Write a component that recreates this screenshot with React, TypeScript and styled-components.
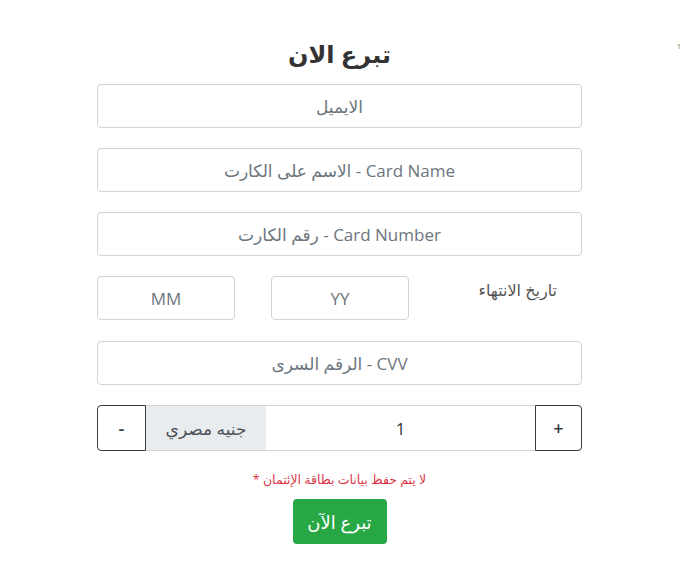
import React from "react";
import styled, { createGlobalStyle } from "styled-components";

const GlobalStyle = createGlobalStyle`
  html, body {
    margin: 0;
    padding: 0;
    background: #fff;
  }
  body {
    font-family: "Open Sans", "DejaVu Sans", sans-serif;
    color: #495057;
  }
  * {
    box-sizing: border-box;
  }
`;

const Page = styled.div`
  position: relative;
  width: 690px;
  min-height: 579px;
  padding: 36px 11px 0 0;
`;

const Mark = styled.span`
  position: absolute;
  top: 42px;
  left: 677px;
  font-size: 7px;
  color: #8a6d3b;
`;

const Form = styled.form`
  width: 485px;
  margin: 0 auto;
  display: flex;
  flex-direction: column;
  gap: 20px;
`;

const Title = styled.h2`
  margin: 0 0 -8px;
  text-align: center;
  font-size: 24px;
  font-weight: 700;
  color: #333;
  line-height: 36px;
`;

const Input = styled.input<{ $width?: number }>`
  display: block;
  width: ${p => (p.$width ? `${p.$width}px` : "100%")};
  height: 44px;
  padding: 6px 12px;
  border: 1px solid #ced4da;
  border-radius: 4px;
  font-family: inherit;
  font-size: 17px;
  color: #495057;
  text-align: center;
  background: #fff;
  outline: none;
  &::placeholder {
    color: #6c757d;
  }
`;

const DateRow = styled.div`
  display: flex;
  align-items: flex-start;
  gap: 36px;
  height: 45px;
`;

const DateLabel = styled.label`
  flex: 1;
  padding: 3px 25px 0 0;
  font-size: 16px;
  color: #555;
`;

const Group = styled.div`
  display: flex;
  height: 46px;
`;

const StepButton = styled.button<{ $side: "left" | "right" }>`
  width: ${p => (p.$side === "right" ? "47px" : "49px")};
  height: 46px;
  border: 1px solid #343a40;
  background: #fff;
  color: #343a40;
  font-family: inherit;
  font-size: 18px;
  font-weight: 600;
  border-radius: ${p => (p.$side === "right" ? "0 4px 4px 0" : "4px 0 0 4px")};
  padding: 0;
`;

const Addon = styled.span`
  width: 120px;
  display: flex;
  align-items: center;
  justify-content: center;
  background: #e9ecef;
  border-top: 1px solid #ced4da;
  border-bottom: 1px solid #ced4da;
  font-size: 17px;
  color: #495057;
`;

const Amount = styled(Input)`
  flex: 1;
  width: auto;
  height: 46px;
  border-radius: 0;
  border-left: none;
  border-right: none;
  color: #333;
`;

const Notice = styled.p`
  margin: 0 0 -9px;
  text-align: center;
  font-size: 12.5px;
  color: #dc3545;
`;

const Submit = styled.button`
  align-self: center;
  width: 94px;
  height: 45px;
  border: none;
  border-radius: 4px;
  background: #28a745;
  color: #fff;
  font-family: inherit;
  font-size: 18px;
  font-weight: 500;
`;

export default function App() {
  return (
    <Page>
      <GlobalStyle />
      <Mark>1</Mark>
      <Form dir="rtl" onSubmit={e => e.preventDefault()}>
        <Title>تبرع الان</Title>
        <Input type="email" placeholder="الايميل" />
        <Input placeholder="Card Name - الاسم على الكارت" />
        <Input placeholder="Card Number - رقم الكارت" />
        <DateRow>
          <DateLabel>تاريخ الانتهاء</DateLabel>
          <Input $width={138} placeholder="YY" />
          <Input $width={138} placeholder="MM" />
        </DateRow>
        <Input placeholder="CVV - الرقم السرى" />
        <Group>
          <StepButton type="button" $side="right">+</StepButton>
          <Amount defaultValue="1" />
          <Addon>جنيه مصري</Addon>
          <StepButton type="button" $side="left">-</StepButton>
        </Group>
        <Notice>لا يتم حفظ بيانات بطاقة الإئتمان *</Notice>
        <Submit type="submit">تبرع الآن</Submit>
      </Form>
    </Page>
  );
}
